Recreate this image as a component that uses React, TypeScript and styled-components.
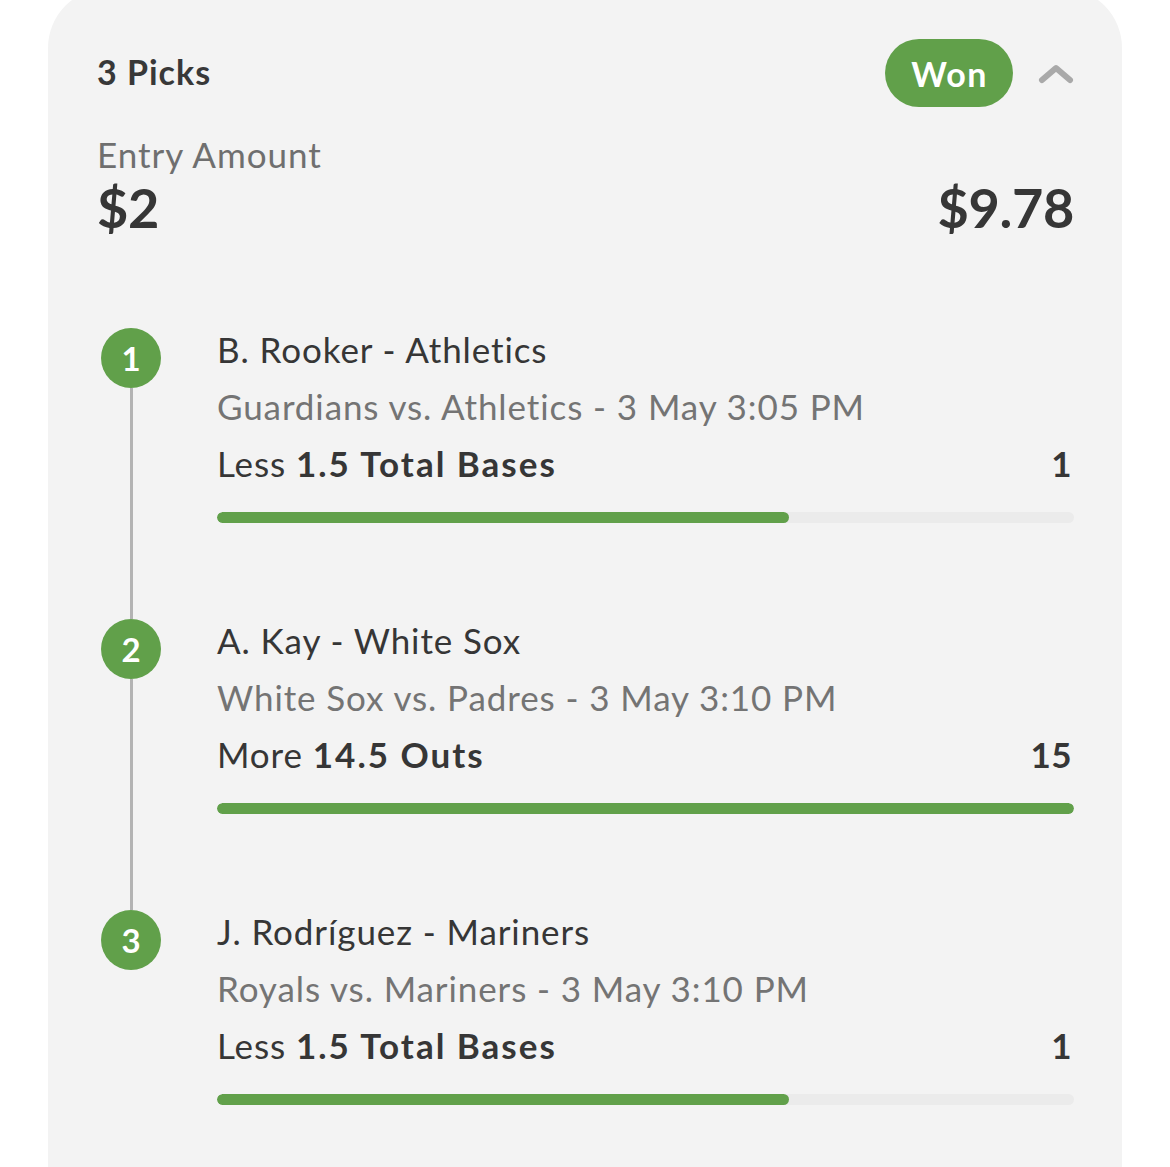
import styled, { createGlobalStyle } from 'styled-components'

const GlobalStyle = createGlobalStyle`
  body {
    margin: 0;
    background: #ffffff;
    font-family: Lato, "Noto Sans", sans-serif;
    color: #363636;
    overflow: hidden;
  }
`

const Page = styled.div`
  padding: 0 48px;
  height: 1167px;
  overflow: hidden;
`

const Card = styled.div`
  margin-top: -12px;
  background: #f3f3f3;
  border-radius: 60px;
  padding: 51px 48px 120px 49px;
`

const HeaderRow = styled.div`
  display: flex;
  align-items: center;
  justify-content: space-between;
  height: 68px;
`

const Title = styled.div`
  font-size: 34px;
  font-weight: 700;
  letter-spacing: 1px;
  color: #383838;
  margin-top: -4px;
`

const HeaderRight = styled.div`
  display: flex;
  align-items: center;
  gap: 25px;
`

const Badge = styled.div`
  height: 68px;
  padding: 0 25px 0 26px;
  border-radius: 34px;
  background: #61a04a;
  color: #ffffff;
  font-size: 34px;
  font-weight: 700;
  letter-spacing: 1.5px;
  display: flex;
  align-items: center;
`

const Chevron = styled.svg`
  width: 36px;
  height: 20px;
  margin-top: 2px;
`

const AmountBlock = styled.div`
  margin-top: 25px;
  display: flex;
  align-items: flex-end;
  justify-content: space-between;
`

const Label = styled.div`
  font-size: 35px;
  line-height: 44px;
  letter-spacing: 1px;
  color: #6f6f6f;
`

const Money = styled.div`
  font-size: 54px;
  line-height: 64px;
  font-weight: 700;
  color: #363636;
  letter-spacing: -0.3px;
`

const PickList = styled.div`
  margin-top: 81px;
  padding-left: 4px;
`

const PickRow = styled.div`
  display: flex;
  gap: 56px;
`

const Rail = styled.div`
  width: 60px;
  flex-shrink: 0;
  display: flex;
  flex-direction: column;
  align-items: center;
`

const Stub = styled.div<{ $show: boolean }>`
  height: 7px;
  width: 3px;
  background: ${(p) => (p.$show ? '#b3b3b3' : 'transparent')};
`

const Connector = styled.div<{ $show: boolean }>`
  flex: 1;
  width: 3px;
  background: ${(p) => (p.$show ? '#b3b3b3' : 'transparent')};
`

const Dot = styled.div`
  width: 60px;
  height: 60px;
  border-radius: 50%;
  background: #61a04a;
  color: #ffffff;
  font-size: 33px;
  font-weight: 700;
  display: flex;
  align-items: center;
  justify-content: center;
`

const PickBody = styled.div`
  flex: 1;
  padding-bottom: 89px;
`

const Line = styled.div<{ $muted?: boolean }>`
  font-size: 35px;
  line-height: 57px;
  letter-spacing: 0.9px;
  color: ${(p) => (p.$muted ? '#747474' : '#363636')};
  white-space: nowrap;
`

const StatRow = styled.div`
  display: flex;
  justify-content: space-between;
  font-size: 35px;
  line-height: 57px;
  letter-spacing: 0.9px;
  color: #363636;
`

const Strong = styled.span`
  font-weight: 700;
  letter-spacing: 2px;
`

const Value = styled.span`
  font-weight: 700;
  padding-right: 2px;
  letter-spacing: 0.5px;
`

const Track = styled.div`
  margin-top: 20px;
  height: 11px;
  border-radius: 6px;
  background: #ebebeb;
  overflow: hidden;
`

const Fill = styled.div`
  height: 100%;
  border-radius: 6px;
  background: #61a04a;
`

type Pick = {
  player: string
  game: string
  side: string
  line: string
  actual: string
  progress: number
}

const picks: Pick[] = [
  {
    player: 'B. Rooker - Athletics',
    game: 'Guardians vs. Athletics - 3 May 3:05 PM',
    side: 'Less',
    line: '1.5 Total Bases',
    actual: '1',
    progress: 66.7,
  },
  {
    player: 'A. Kay - White Sox',
    game: 'White Sox vs. Padres - 3 May 3:10 PM',
    side: 'More',
    line: '14.5 Outs',
    actual: '15',
    progress: 100,
  },
  {
    player: 'J. Rodríguez - Mariners',
    game: 'Royals vs. Mariners - 3 May 3:10 PM',
    side: 'Less',
    line: '1.5 Total Bases',
    actual: '1',
    progress: 66.7,
  },
]

export default function App() {
  return (
    <>
      <GlobalStyle />
      <Page>
        <Card>
          <HeaderRow>
            <Title>3 Picks</Title>
            <HeaderRight>
              <Badge>Won</Badge>
              <Chevron viewBox="0 0 36 20" fill="none">
                <path d="M4 16 L18 4 L32 16" stroke="#a9a9a9" strokeWidth="6" strokeLinecap="round" strokeLinejoin="round" />
              </Chevron>
            </HeaderRight>
          </HeaderRow>

          <AmountBlock>
            <div>
              <Label>Entry Amount</Label>
              <Money>$2</Money>
            </div>
            <Money>$9.78</Money>
          </AmountBlock>

          <PickList>
            {picks.map((pick, i) => (
              <PickRow key={pick.player}>
                <Rail>
                  <Stub $show={i > 0} />
                  <Dot>{i + 1}</Dot>
                  <Connector $show={i < picks.length - 1} />
                </Rail>
                <PickBody>
                  <Line>{pick.player}</Line>
                  <Line $muted>{pick.game}</Line>
                  <StatRow>
                    <span>
                      {pick.side} <Strong>{pick.line}</Strong>
                    </span>
                    <Value>{pick.actual}</Value>
                  </StatRow>
                  <Track>
                    <Fill style={{ width: `${pick.progress}%` }} />
                  </Track>
                </PickBody>
              </PickRow>
            ))}
          </PickList>
        </Card>
      </Page>
    </>
  )
}
